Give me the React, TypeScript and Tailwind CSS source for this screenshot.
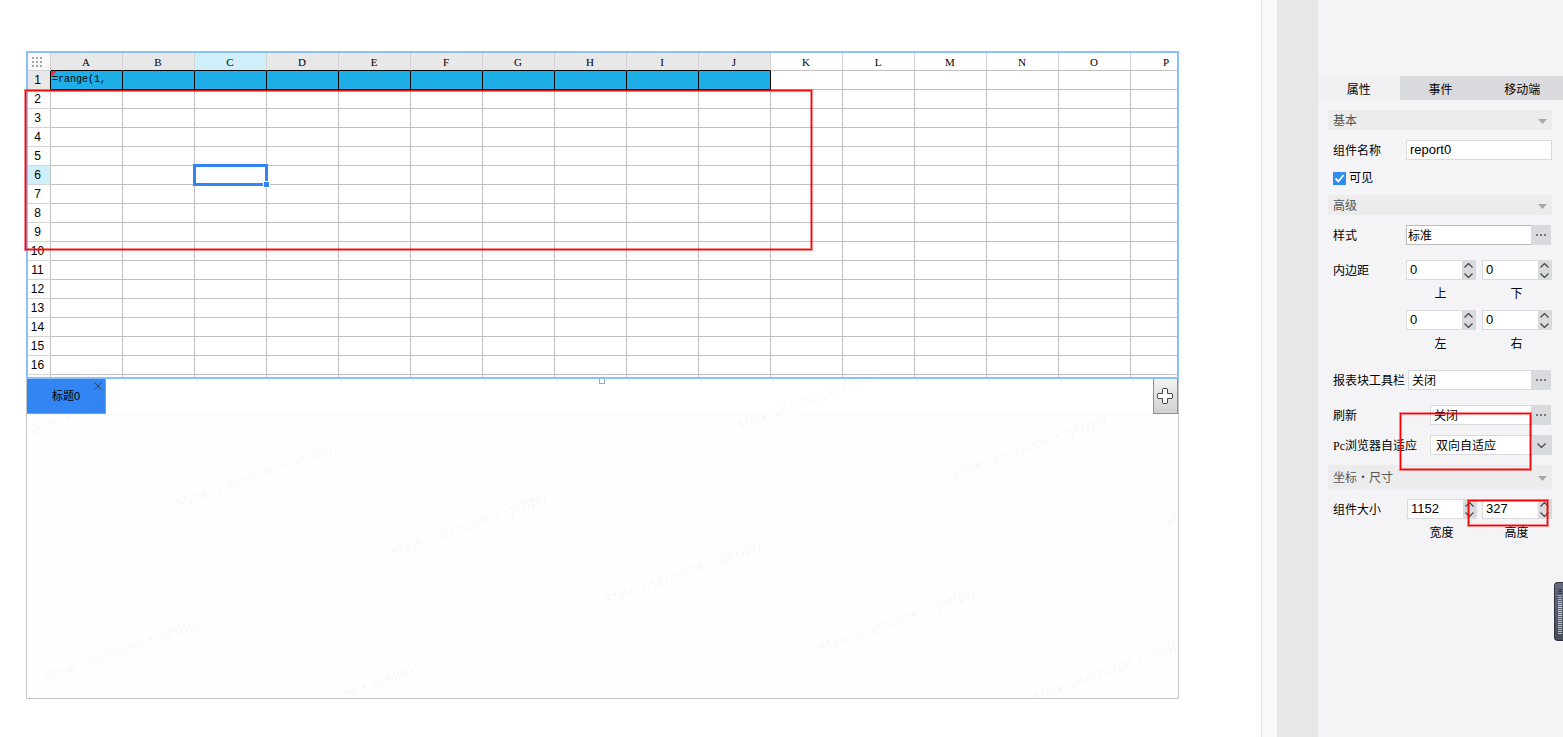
import { useState } from 'react';
import type { ReactNode } from 'react';
import clsx from 'clsx';

const COLUMNS = 'ABCDEFGHIJKLMNOP'.split('');
const ROWS = Array.from({ length: 17 }, (_, i) => i + 1);
const FILLED_COLUMNS = 10;
const ACTIVE_COLUMN = 'C';
const ACTIVE_ROW = 6;

// Bottom left corner of each watermark, relative to the tab body
const WATERMARKS = [
  { x: -74, y: 88 },
  { x: 141, y: 136 },
  { x: 356, y: 185 },
  { x: 570, y: 233 },
  { x: 784, y: 281 },
  { x: 998, y: 330 },
  { x: 9, y: 310 },
  { x: 223, y: 358 },
  { x: 702, y: 58 },
  { x: 916, y: 107 },
  { x: 1130, y: 155 },
];

const METER_COLORS = [
  '#343846', '#343846', '#343846', '#e8806c', '#e8906c', '#eda06a', '#efb468', '#efc867',
  '#ecd868', '#e6e06a', '#dfe46e', '#d6e674', '#cce67c', '#c0e684', '#b4e68e', '#a6e498',
  '#9ae4a2', '#90e2ae', '#88e0b8', '#82dec2', '#7cdcca', '#78dad0', '#74d8d6',
];

function Highlight({ className }: { className: string }) {
  return (
    <div
      className={clsx(
        'pointer-events-none absolute z-20 border border-[#ff0000] shadow-[0_0_0_1px_rgba(255,0,0,0.45),inset_0_0_0_1px_rgba(255,0,0,0.45)]',
        className,
      )}
    />
  );
}

function Sheet() {
  return (
    <div className="relative z-10">
      <div className="h-[328px] overflow-hidden border-2 border-[#8ac1fb] bg-white">
        <table className="w-[1175px] table-fixed border-separate border-spacing-0 text-xs leading-4 text-black">
          <colgroup>
            <col className="w-[23px]" />
            {COLUMNS.map(c => <col key={c} className="w-[72px]" />)}
          </colgroup>
          <thead>
            <tr className="h-[18px]">
              <td className="border-r border-b border-[#d4d4d4] bg-[#f8f8fa] p-0 pr-[5px]">
                <svg width="10" height="10" viewBox="0 0 10 10" className="mx-auto block" fill="#a3a3a3">
                  {[0, 4, 8].map(y => [0, 4, 8].map(x => (
                    <rect key={`${x}-${y}`} x={x} y={y} width="2" height="2" />
                  )))}
                </svg>
              </td>
              {COLUMNS.map((c, i) => (
                <th
                  key={c}
                  scope="col"
                  className={clsx(
                    'border-r border-b border-r-[#d4d4d4] p-0 pt-px pr-px font-["Liberation_Serif",serif] text-[11px] leading-4 font-normal',
                    i < FILLED_COLUMNS ? 'border-b-black' : 'border-b-[#c0c0c0]',
                    c === ACTIVE_COLUMN ? 'bg-[#cfeffb]' : i < FILLED_COLUMNS ? 'bg-[#e8e8e8]' : 'bg-white',
                  )}
                >
                  {c}
                </th>
              ))}
            </tr>
          </thead>
          <tbody>
            {ROWS.map(row => (
              <tr key={row} className="h-[19px]">
                <th
                  scope="row"
                  className={clsx(
                    'border-r border-b border-b-[#d4d4d4] p-0 pr-[3px] font-normal',
                    row === 1 ? 'border-r-black bg-[#e8e8e8]' : 'border-r-[#c0c0c0]',
                    row === ACTIVE_ROW && 'bg-[#cfeffb]',
                  )}
                >
                  {row}
                </th>
                {COLUMNS.map((c, i) => (
                  <td
                    key={c}
                    className={clsx(
                      'relative border-r border-b p-0',
                      row === 1 && i < FILLED_COLUMNS ? 'border-black bg-[#1eaee8]' : 'border-[#c0c0c0]',
                    )}
                  >
                    {row === 1 && c === 'A' && (
                      <>
                        <svg width="6" height="6" viewBox="0 0 6 6" className="absolute top-0 left-0">
                          <path d="M0 0h6L0 6z" fill="#f0284a" />
                        </svg>
                        <div className='relative h-4 overflow-hidden pl-px font-["Liberation_Mono",monospace] text-[10px] leading-4'>
                          =range(1,
                        </div>
                      </>
                    )}
                    {row === ACTIVE_ROW && c === ACTIVE_COLUMN && (
                      <>
                        <div className="absolute -top-[2px] -left-[2px] z-10 h-[22px] w-[75px] border-3 border-[#3385f3]" />
                        <div className="absolute top-[15px] left-[68px] z-10 h-[7px] w-[7px] border border-white bg-[#3385f3]" />
                      </>
                    )}
                  </td>
                ))}
              </tr>
            ))}
          </tbody>
        </table>
      </div>
      <div className="absolute top-full left-1/2 h-[5px] w-[6px] -translate-x-1 border border-t-0 border-[#86abd0] bg-white" />
      <Highlight className="top-[39px] -left-px h-[160px] w-[787px]" />
    </div>
  );
}

function TabBody() {
  return (
    <div className="relative h-[320px] overflow-hidden border border-t-0 border-[#c4c4c4] bg-[#fefefe]">
      <div className="flex h-9 items-stretch justify-between border-b border-[#fafafa] bg-white">
        <button className="relative w-[79px] border-r border-b border-[#8f9bab] bg-[#3385f3] text-[11px] text-black">
          标题0
          <svg width="8" height="8" viewBox="0 0 8 8" className="absolute top-[3px] right-[3px]" fill="none" stroke="#33435c">
            <path d="M.5.5l7 7M7.5.5l-7 7" />
          </svg>
        </button>
        <button
          aria-label="添加"
          className="flex w-[25px] items-center justify-center border border-t-0 border-[#8f8f8f] bg-linear-to-b from-[#f3f3f3] to-[#d0d0d0] pr-px"
        >
          <svg width="16" height="16" viewBox="0 0 16 16" fill="#fff" stroke="#4a4a4a" strokeLinejoin="round">
            <path d="M6 .5h4l.5.5v4.5H15l.5.5v4l-.5.5h-4.5V15l-.5.5H6l-.5-.5v-4.5H1l-.5-.5V6l.5-.5h4.5V1z" />
          </svg>
        </button>
      </div>
      {WATERMARKS.map(({ x, y }) => (
        <span
          key={`${x}-${y}`}
          className='pointer-events-none absolute origin-bottom-left -rotate-20 font-["Noto_Sans",sans-serif] text-sm leading-4 whitespace-nowrap text-black/4 select-none'
          style={{ left: x, top: y - 16 }}
        >
          = $fine_username + getIp()
        </span>
      ))}
    </div>
  );
}

function Section({ title, className }: { title: string; className?: string }) {
  return (
    <button
      className={clsx(
        'flex w-full items-center justify-between bg-[#ececec] px-[5px] font-["Noto_Sans_CJK_SC",sans-serif] text-xs leading-4 text-[#555]',
        className,
      )}
    >
      {title}
      <svg width="9" height="5" viewBox="0 0 9 5" className="mt-[2px]" fill="#a8a8a8">
        <path d="M0 0h9L4.500 5z" />
      </svg>
    </button>
  );
}

function Row({ label, htmlFor, className, children }: {
  label: ReactNode;
  htmlFor?: string;
  className?: string;
  children: ReactNode;
}) {
  return (
    <div className={clsx('flex justify-between', className)}>
      <label htmlFor={htmlFor} className="h-5 w-0 pl-[5px] leading-[22px] whitespace-nowrap">{label}</label>
      {children}
    </div>
  );
}

function MoreField({ id, value, className }: { id: string; value: string; className: string }) {
  return (
    <div className="mr-px flex h-5">
      <input id={id} defaultValue={value} className={clsx('border border-r-0 bg-white pt-px outline-none', className)} />
      <button aria-label="更多" className="flex w-5 items-center justify-center bg-[#d9dadd]">
        <svg width="10" height="2" viewBox="0 0 10 2" fill="#777">
          <path d="M0 0h2v2H0zM4 0h2v2H4zM8 0h2v2H8z" />
        </svg>
      </button>
    </div>
  );
}

function Spinner({ id, label, value }: { id: string; label: string; value: string }) {
  return (
    <div className="flex flex-col gap-1">
      <div className="flex h-5 w-[70px]">
        <input
          id={id}
          defaultValue={value}
          className="w-14 border border-r-0 border-[#d9dadd] bg-white px-[3px] text-[13px] outline-none"
        />
        <div className="flex flex-1 flex-col bg-[#d9dadd] pr-px">
          <button aria-label={`${label}增加`} className="flex flex-1 items-center justify-center">
            <svg width="9" height="5" viewBox="0 0 9 5" fill="none" stroke="#444" strokeWidth="1.200">
              <path d="M.5 4.500l4-4 4 4" />
            </svg>
          </button>
          <button aria-label={`${label}减少`} className="flex flex-1 items-center justify-center">
            <svg width="9" height="5" viewBox="0 0 9 5" fill="none" stroke="#444" strokeWidth="1.200">
              <path d="M.5.5l4 4 4-4" />
            </svg>
          </button>
        </div>
      </div>
      <label htmlFor={id} className="h-[18px] pr-px text-center leading-5">{label}</label>
    </div>
  );
}

const PANEL_TABS = ['属性', '事件', '移动端'];

function PropertyPanel() {
  const [tab, setTab] = useState('属性');

  return (
    <aside className="w-[245px] shrink-0 bg-[#f4f4f7] pt-[76px] text-xs text-black">
      <div role="tablist" className="flex h-6">
        {PANEL_TABS.map(name => (
          <button
            key={name}
            role="tab"
            aria-selected={tab === name}
            onClick={() => setTab(name)}
            className={clsx('flex-1 pt-[3px]', tab === name ? 'bg-[#f0f0f2]' : 'bg-[#d9dadd]')}
          >
            {name}
          </button>
        ))}
      </div>

      <div className="relative pt-[10px] pr-[11px] pl-[10px]">
        <Section title="基本" className="h-5" />
        <Row label="组件名称" htmlFor="name" className="mt-[10px]">
          <input
            id="name"
            defaultValue="report0"
            className="h-5 w-[146px] border border-[#d9dadd] bg-white px-[3px] pb-px text-[13px] outline-none"
          />
        </Row>
        <label className="mt-2 flex h-5 items-center gap-[3px] pl-[5px]">
          <input type="checkbox" defaultChecked className="peer sr-only" />
          <svg width="13" height="13" viewBox="0 0 13 13" className="bg-[#2f8df0]" fill="none" stroke="#fff" strokeWidth="1.800">
            <path d="M2.500 6.500l3 3 5-6.500" />
          </svg>
          可见
        </label>

        <Section title="高级" className="mt-[7px] h-5" />
        <Row label="样式" htmlFor="style" className="mt-[10px]">
          <MoreField id="style" value="标准" className="w-[125px] border-[#bcbcbc] px-px" />
        </Row>
        <Row label="内边距" className="mt-[15px]">
          <div className="grid grid-cols-2 gap-x-[6px] gap-y-2">
            <Spinner id="top" label="上" value="0" />
            <Spinner id="bottom" label="下" value="0" />
            <Spinner id="left" label="左" value="0" />
            <Spinner id="right" label="右" value="0" />
          </div>
        </Row>
        <Row label="报表块工具栏" htmlFor="toolbar" className="mt-[18px]">
          <MoreField id="toolbar" value="关闭" className="w-[123px] border-[#d9dadd] px-[3px]" />
        </Row>
        <Row label="刷新" htmlFor="refresh" className="mt-[15px]">
          <MoreField id="refresh" value="关闭" className="w-[101px] border-[#d9dadd] px-[3px]" />
        </Row>
        <Row
          label={<><span className='font-["Liberation_Serif",serif]'>Pc</span>浏览器自适应</>}
          htmlFor="fit"
          className="mt-[10px]"
        >
          <div className="relative">
            <select
              id="fit"
              className="block h-5 w-[122px] appearance-none border border-r-20 border-[#d9dadd] bg-white pt-px pl-[5px] outline-none"
            >
              <option>双向自适应</option>
            </select>
            <svg width="9" height="5" viewBox="0 0 9 5" className="pointer-events-none absolute top-2 right-[6px]" fill="none" stroke="#444" strokeWidth="1.200">
              <path d="M.5.5l4 4 4-4" />
            </svg>
          </div>
        </Row>

        <Section title="坐标·尺寸" className="mt-[10px] h-6" />
        <Row label="组件大小" className="mt-[10px]">
          <div className="grid grid-cols-2 gap-x-[5px]">
            <Spinner id="width" label="宽度" value="1152" />
            <Spinner id="height" label="高度" value="327" />
          </div>
        </Row>

        <Highlight className="top-[313px] left-[82px] h-[57px] w-[131px]" />
        <Highlight className="top-[400px] left-[150px] h-[26px] w-[80px]" />
      </div>
    </aside>
  );
}

function FloatingMeter() {
  return (
    <div className="absolute top-[582px] right-0 flex h-[59px] w-[9px] flex-col gap-px rounded-l border border-r-0 border-[#2d303a] bg-linear-to-b from-[#646a7e] to-[#4a4e5a] pt-[6px] pl-[3px]">
      {METER_COLORS.map((color, i) => (
        <div key={i} className="h-px w-1 shrink-0" style={{ backgroundColor: color }} />
      ))}
    </div>
  );
}

export default function App() {
  return (
    <div className='relative flex min-h-screen overflow-hidden bg-white font-["Liberation_Sans","Noto_Sans_CJK_SC",sans-serif]'>
      <main className="min-w-0 flex-1 pt-[51px] pr-[82px] pl-[26px]">
        <Sheet />
        <TabBody />
      </main>
      <div className="w-4 shrink-0 border-l border-[#e6e6de] bg-[#f9f9f7]" />
      <div className="w-[41px] shrink-0 border-l border-[#e4e4dc] bg-[#e7e7e7]" />
      <PropertyPanel />
      <FloatingMeter />
    </div>
  );
}
